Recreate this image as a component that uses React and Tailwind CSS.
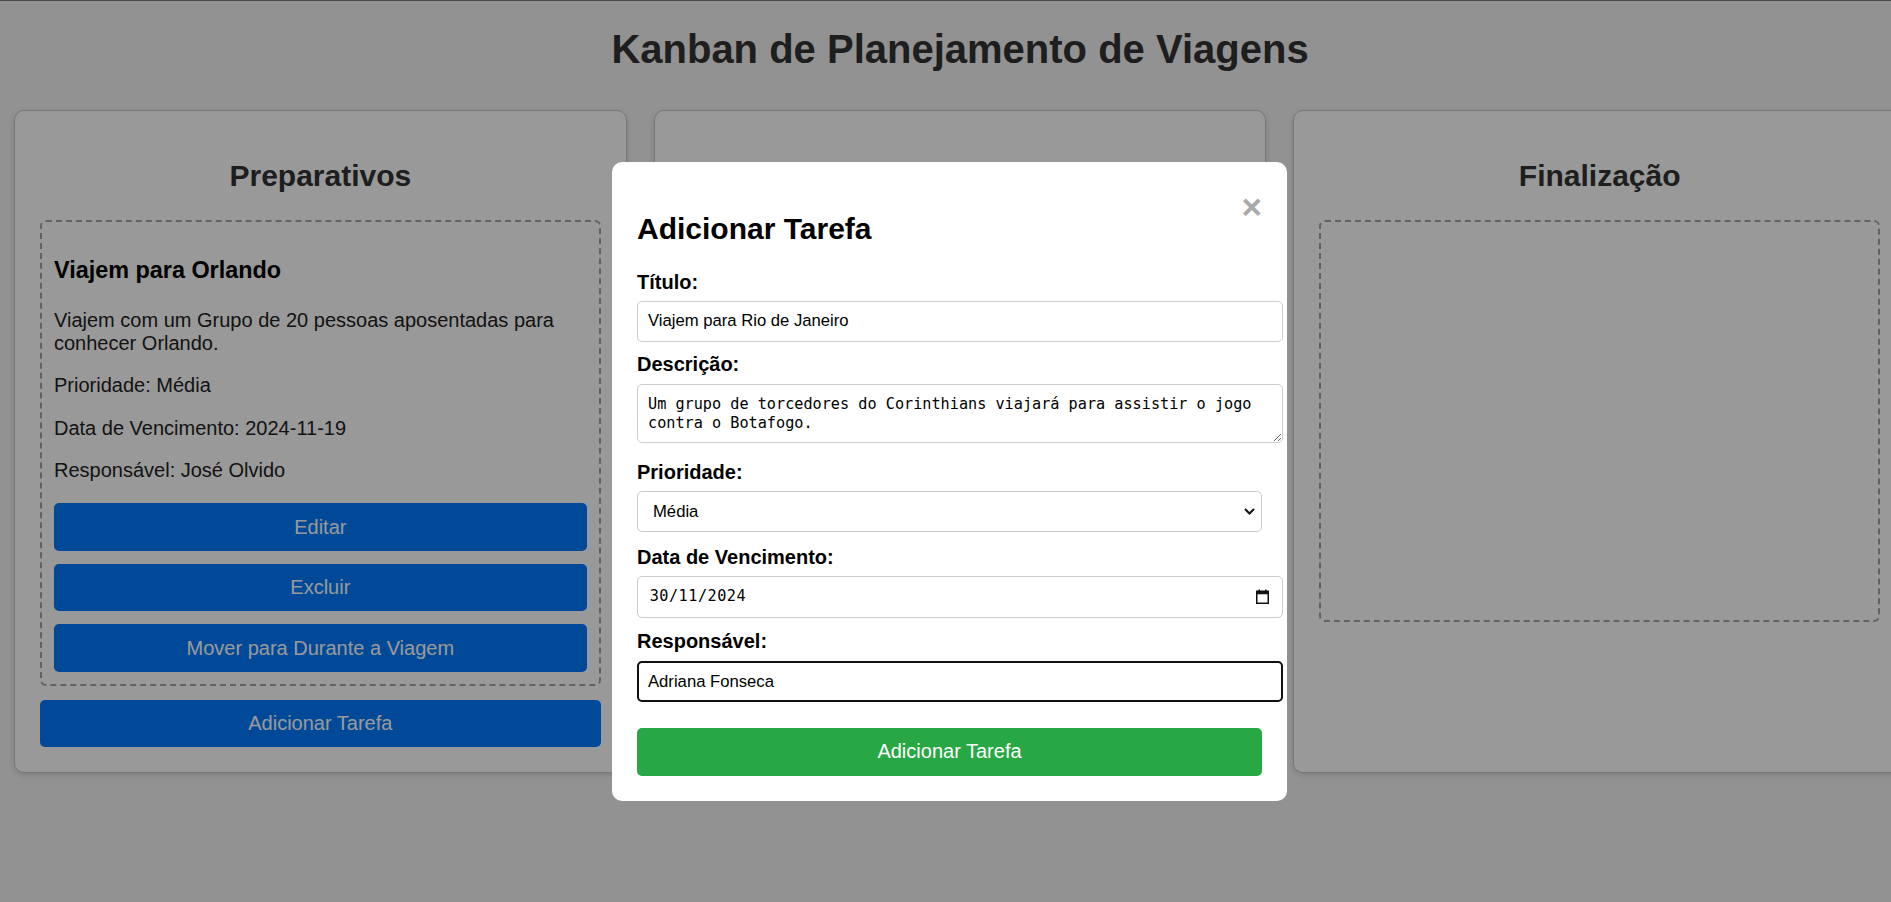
import React from "react";

function Column({ title, children }) {
  return (
    <section className="flex-1 min-w-0 bg-white border border-[#c8c8c8] rounded-[10px] px-[25px] pt-[25px] pb-[25px] shadow-[0_2px_6px_rgba(0,0,0,0.14)]">
      <h2 className="mt-[23px] mb-[26px] text-center text-[30px] leading-[34.5px] font-bold text-[#333]">
        {title}
      </h2>
      {children}
    </section>
  );
}

function BlueButton({ children, className = "" }) {
  return (
    <button
      type="button"
      className={
        "block w-full h-[47.5px] rounded-[5px] bg-[#007bff] text-white text-[20px] leading-[23px] " +
        className
      }
    >
      {children}
    </button>
  );
}

export default function App() {
  return (
    <div className="relative w-[1891px] h-[902px] overflow-hidden bg-[#f4f4f4] font-['Liberation_Sans',Arial,sans-serif] text-[#333]">
      <div className="w-[1920px] border-t border-[#7a7a7a]">
        <h1 className="mt-[25px] mb-[38px] text-center text-[40px] leading-[46px] font-bold text-[#333]">
          Kanban de Planejamento de Viagens
        </h1>

        <div className="flex items-stretch gap-[27px] px-[14px]">
          <Column title="Preparativos">
            <div className="border-2 border-dashed border-[#a4a4a4] rounded-[6px] p-[12px] min-h-[402px]">
              <div className="text-[20px] leading-[23px] text-[#222]">
                <h3 className="mt-[23px] text-[23.4px] leading-[27px] font-bold text-black">
                  Viajem para Orlando
                </h3>
                <p className="mt-[25px]">
                  Viajem com um Grupo de 20 pessoas aposentadas para conhecer Orlando.
                </p>
                <p className="mt-[19.6px]">Prioridade: Média</p>
                <p className="mt-[19.7px]">Data de Vencimento: 2024-11-19</p>
                <p className="mt-[19.7px]">Responsável: José Olvido</p>
                <BlueButton className="mt-[21px]">Editar</BlueButton>
                <BlueButton className="mt-[13px]">Excluir</BlueButton>
                <BlueButton className="mt-[13px]">Mover para Durante a Viagem</BlueButton>
              </div>
            </div>
            <BlueButton className="mt-[14px]">Adicionar Tarefa</BlueButton>
          </Column>

          <Column title="Durante a Viagem">
            <div className="border-2 border-dashed border-[#a4a4a4] rounded-[6px] p-[12px] min-h-[402px]" />
          </Column>

          <Column title="Finalização">
            <div className="border-2 border-dashed border-[#a4a4a4] rounded-[6px] p-[12px] min-h-[402px]" />
          </Column>
        </div>
      </div>

      {/* modal overlay */}
      <div className="absolute inset-0 bg-[rgba(0,0,0,0.4)]">
        <div className="absolute left-[612px] top-[162px] w-[675px] bg-white rounded-[10px] p-[25px] text-black">
          <span className="float-right text-[35px] leading-[40px] font-bold text-[#aaa] cursor-pointer">
            ×
          </span>
          <h2 className="mt-[24.5px] mb-[24.5px] text-[30px] leading-[34.5px] font-bold">
            Adicionar Tarefa
          </h2>

          <label className="block text-[20px] leading-[23px] font-bold mb-[7px]">Título:</label>
          <input
            readOnly
            value="Viajem para Rio de Janeiro"
            className="block w-[646px] h-[41px] border border-[#ccc] rounded-[5px] px-[10px] text-[16.67px] text-black bg-white outline-none mb-[11.7px]"
          />

          <label className="block text-[20px] leading-[23px] font-bold mb-[8px]">Descrição:</label>
          <textarea
            readOnly
            value="Um grupo de torcedores do Corinthians viajará para assistir o jogo contra o Botafogo."
            className="block w-[646px] h-[59px] border border-[#ccc] rounded-[5px] pl-[10px] pr-[10px] pt-[9.8px] pb-[6px] overflow-hidden font-['DejaVu_Sans_Mono',monospace] text-[15.2px] leading-[19.3px] text-black bg-white outline-none mb-[17.4px]"
          />

          <label className="block text-[20px] leading-[23px] font-bold mb-[7px]">Prioridade:</label>
          <div className="flex items-center justify-between w-full h-[41.6px] border border-[#ccc] rounded-[5px] pl-[15px] pr-[5.7px] text-[16.67px] text-black mb-[13.4px]">
            <span>Média</span>
            <svg width="11" height="7" viewBox="0 0 11 7" fill="none">
              <path d="M1 1l4.5 4.5L10 1" stroke="#111" strokeWidth="2" />
            </svg>
          </div>

          <label className="block text-[20px] leading-[23px] font-bold mb-[7px]">Data de Vencimento:</label>
          <div className="flex items-center justify-between w-[646px] h-[42.6px] border border-[#ccc] rounded-[5px] pl-[11.7px] pr-[13.3px] mb-[11.8px]">
            <span className="font-['DejaVu_Sans_Mono',monospace] text-[15.2px] tracking-[0.5px] text-black">
              30/11/2024
            </span>
            <svg width="13" height="15" viewBox="0 0 13 15" fill="none">
              <path d="M3.25 0.5v2.5M9.75 0.5v2.5" stroke="#111" strokeWidth="1.5" />
              <rect x="0.75" y="2.25" width="11.5" height="12" stroke="#111" strokeWidth="1.5" />
              <rect x="0.75" y="2.25" width="11.5" height="3" fill="#111" />
            </svg>
          </div>

          <label className="block text-[20px] leading-[23px] font-bold mb-[8px]">Responsável:</label>
          <input
            readOnly
            value="Adriana Fonseca"
            className="block w-[646px] h-[41.3px] border-2 border-[#111] rounded-[5px] px-[9px] text-[16.67px] text-black bg-white outline-none mb-[26px]"
          />

          <button
            type="button"
            className="block w-full h-[47.4px] rounded-[5px] bg-[#28a745] text-white text-[20px] leading-[23px]"
          >
            Adicionar Tarefa
          </button>
        </div>
      </div>
    </div>
  );
}
